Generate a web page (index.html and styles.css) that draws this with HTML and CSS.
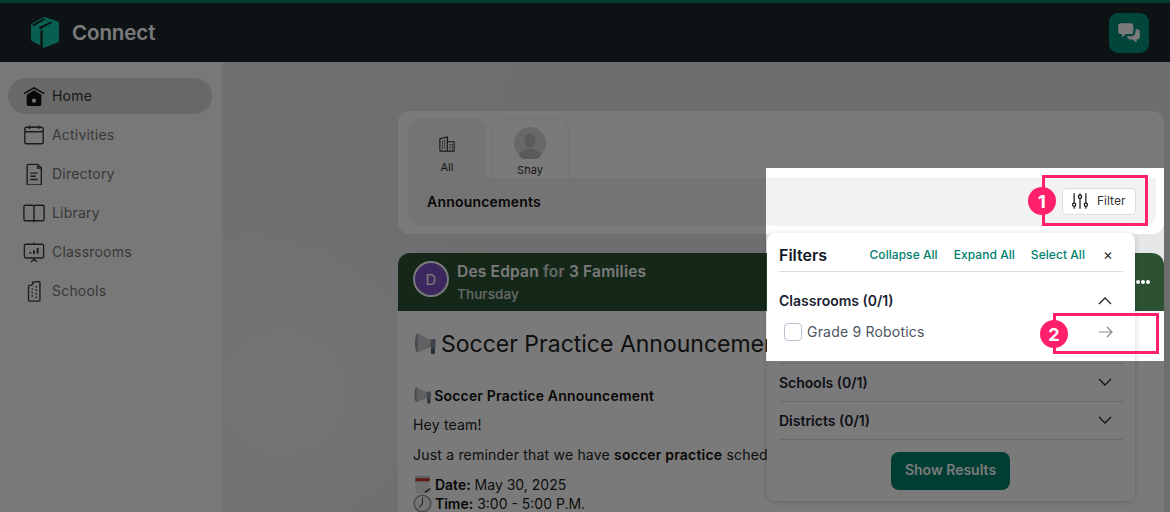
FILE: index.html
```html
<!DOCTYPE html>
<html lang="en">
<head>
<meta charset="utf-8">
<title>Connect</title>
<link rel="stylesheet" href="styles.css">
</head>
<body>
<div class="app">
  <header class="topbar">
    <div class="brand">
      <svg class="logo" viewBox="0 0 28 31"><path fill="#12c4a6" d="M0 8.500C0 7.600.4 7 1.200 6.500L12 .6c.9-.5 1.700-.6 2.600-.3l11.700 4c1 .3 1.700.8 1.700 1.800v17.600c0 .9-.5 1.400-1.300 1.700L13.200 30.700c-.9.300-1.500-.1-1.500-1V13c-1.100-.2-1.900.1-2.300.9V28.500L1.200 24.300C.4 23.900 0 23.300 0 22.500z"/><path fill="none" stroke="#10181b" stroke-width="1.800" d="M1.800 8.500 13.500 2M8.500 11 20.500 5.200M8.500 11.500c1-.9 2.200-1.100 3.300-.5"/></svg>
      <span class="brand-name">Connect</span>
    </div>
    <button class="chat-btn" aria-label="Messages">
      <svg viewBox="0 0 24 24" width="26" height="26"><path fill="#fff" d="M4.500 3h9C15 3 16 4 16 5.500v5C16 12 15 13 13.500 13H9l-3.500 3v-3h-1C3 13 2 12 2 10.500v-5C2 4 3 3 4.500 3z"/><path fill="#fff" d="M18 8.500h1.500C21 8.500 22 9.500 22 11v4.500c0 1.500-1 2.500-2.500 2.500H19v3l-3.500-3H13c-1 0-1.800-.5-2.200-1.300L10 15h4c2.200 0 4-1.800 4-4z"/></svg>
    </button>
  </header>
  <div class="body">
    <nav class="sidebar">
      <a class="nav-item active">
        <svg class="nav-icon" viewBox="0 0 24 24"><path fill="none" stroke="#111" stroke-width="1.600" d="M1 9.500 12 3l11 6.500"/><path fill="#111" d="M4 10.500 12 5.800l8 4.700V21c0 1.100-.9 2-2 2H6c-1.100 0-2-.9-2-2z"/><rect x="10" y="15" width="4" height="4" rx=".6" fill="#f1f1f1"/></svg>
        <span>Home</span>
      </a>
      <a class="nav-item">
        <svg class="nav-icon" viewBox="0 0 24 24" fill="none" stroke="#3c3c3c" stroke-width="1.500"><rect x="2" y="3.500" width="20" height="18" rx="2"/><path d="M2 8.500h20M7 1.500v4M17 1.500v4M10 3.500h4"/></svg>
        <span>Activities</span>
      </a>
      <a class="nav-item">
        <svg class="nav-icon" viewBox="0 0 24 24" fill="none" stroke="#3c3c3c" stroke-width="1.500"><path d="M4.500 3c0-.8.700-1.500 1.500-1.500H16l4 4v17c0 .8-.7 1.500-1.500 1.500H6c-.8 0-1.500-.7-1.500-1.500z"/><path d="M16 1.500v4h4M8 11h8M8 14.500h6M8 18h8"/></svg>
        <span>Directory</span>
      </a>
      <a class="nav-item">
        <svg class="nav-icon" viewBox="0 0 24 24" fill="none" stroke="#3c3c3c" stroke-width="1.500"><path d="M12 5c0-1-.5-1.500-1.500-1.500h-8C1.700 3.500 1 4 1 5v14c0 1 .7 1.500 1.500 1.500H12h9.500c.8 0 1.500-.5 1.500-1.500V5c0-1-.7-1.500-1.500-1.500h-8C12.500 3.500 12 4 12 5zM12 5v17"/></svg>
        <span>Library</span>
      </a>
      <a class="nav-item">
        <svg class="nav-icon" viewBox="0 0 24 24" fill="none" stroke="#3c3c3c" stroke-width="1.500"><rect x="1.500" y="3.500" width="21" height="15" rx="1.500"/><path d="M12 1.500v2M12 18.500v2M8.500 23l3.500-3 3.500 3"/><path stroke-width="2" d="M8 14v-2M12 14v-4M16 14V7.500"/></svg>
        <span>Classrooms</span>
      </a>
      <a class="nav-item">
        <svg class="nav-icon" viewBox="0 0 24 24" fill="none" stroke="#3c3c3c" stroke-width="1.500"><path d="M6 6.500 10.500 5V2.500L17 1.500c1 0 1.500.5 1.500 1.500V21.500c0 .8-.5 1.500-1.500 1.500H7.500C6.700 23 6 22.300 6 21.500z"/><path stroke-width="1.600" stroke-dasharray="1.600 2.200" d="M10 9v11M14.500 6.500V20"/></svg>
        <span>Schools</span>
      </a>
    </nav>
    <main class="main">
      <section class="feed-head">
        <div class="tabs">
          <div class="tab tab-active">
            <svg class="tab-icon" viewBox="0 0 24 24" fill="none" stroke="#333" stroke-width="1.500"><path d="M2.500 21.500V5l10-2.500v19M12.500 9h9v12.500h-19"/><path stroke-dasharray="1.500 1.500" d="M6 8v11M9 7v12M16 12v7M19 12v7"/></svg>
            <span>All</span>
          </div>
          <div class="tab">
            <span class="person">
              <svg viewBox="0 0 32 32" width="32" height="32"><circle cx="16" cy="16" r="16" fill="#dadada"/><ellipse cx="16" cy="13.500" rx="5.500" ry="7" fill="#bcbcbc"/><path fill="#bcbcbc" d="M5 29c1-5 6-7 11-7s10 2 11 7a16 16 0 0 1-22 0z"/></svg>
            </span>
            <span>Shay</span>
          </div>
        </div>
        <div class="toolbar">
          <span class="toolbar-title">Announcements</span>
          <button class="filter-btn">
            <svg viewBox="0 0 20 20" width="18" height="18" fill="none" stroke="#111" stroke-width="1.300"><path d="M3.500 1.500v11M3.500 16v2.500M10 1.500v2M10 7v11.500M16.500 1.500v11M16.500 16v2.500"/><circle cx="3.500" cy="14.200" r="1.800"/><circle cx="10" cy="5.200" r="1.800"/><circle cx="16.500" cy="14.200" r="1.800"/></svg>
            <span>Filter</span>
          </button>
        </div>
      </section>
      <article class="post">
        <div class="post-head">
          <span class="avatar">D</span>
          <div class="post-meta">
            <div class="post-by"><b>Des Edpan</b> <span class="dim">for</span> <b>3 Families</b></div>
            <div class="post-day">Thursday</div>
          </div>
          <span class="post-menu"><i></i><i></i><i></i></span>
        </div>
        <div class="post-body">
          <h1 class="post-title">
            <svg class="emoji-lg" viewBox="0 0 24 24"><ellipse cx="4.500" cy="11" rx="2.500" ry="9.500" fill="#8f9398"/><path fill="#c6c9cd" d="M4.500 1.500 18 8v7L4.500 20.500z"/><path fill="#dcdfe2" d="M8 9h8v2H8z" opacity=".6"/><rect x="17.500" y="7" width="5" height="9" rx="1" fill="#7f8ea0"/><rect x="18" y="16" width="4" height="6" rx="1" fill="#59626c"/></svg>
            <span>Soccer Practice Announcement</span>
          </h1>
          <p class="post-sub">
            <svg class="emoji emoji-tight" viewBox="0 0 24 24"><ellipse cx="4.500" cy="11" rx="2.500" ry="9.500" fill="#8f9398"/><path fill="#c6c9cd" d="M4.500 1.500 18 8v7L4.500 20.500z"/><rect x="17.500" y="7" width="5" height="9" rx="1" fill="#7f8ea0"/><rect x="18" y="16" width="4" height="6" rx="1" fill="#59626c"/></svg>
            <b>Soccer Practice Announcement</b>
          </p>
          <p>Hey team!</p>
          <p class="nowrap">Just a reminder that we have <b>soccer practice</b> scheduled for this Friday after school.</p>
          <ul class="facts">
            <li>
              <svg class="emoji" viewBox="0 0 24 24"><rect x="3" y="1" width="18" height="22" rx="1.500" fill="#e9e9e9"/><rect x="3" y="1" width="18" height="3" fill="#c9c9c9"/><rect x="3" y="4" width="18" height="4" fill="#c8332d"/><path stroke="#333" stroke-width="1.800" d="m15 22 7-5"/></svg>
              <b>Date:</b> May 30, 2025
            </li>
            <li>
              <svg class="emoji" viewBox="0 0 24 24"><circle cx="12" cy="12" r="10.500" fill="#f4f4f4" stroke="#9a9ea3" stroke-width="2"/><path fill="none" stroke="#444" stroke-width="1.300" d="M12 4.500V12l-4 5"/></svg>
              <b>Time:</b> 3:00 - 5:00 P.M.
            </li>
          </ul>
        </div>
      </article>
    </main>
  </div>
</div>

<aside class="filters">
  <div class="filters-head">
    <strong class="filters-title">Filters</strong>
    <a class="link">Collapse All</a>
    <a class="link">Expand All</a>
    <a class="link">Select All</a>
    <span class="close">×</span>
  </div>
  <div class="group group-open">
    <div class="group-row">
      <span>Classrooms (0/1)</span>
      <svg class="chev" viewBox="0 0 14 8"><path d="M1 7l6-6 6 6"/></svg>
    </div>
    <div class="option">
      <span class="check"></span>
      <span class="option-label">Grade 9 Robotics</span>
      <svg class="arrow" viewBox="0 0 14 12"><path d="M0 6h13M8 1l5 5-5 5"/></svg>
    </div>
  </div>
  <div class="group">
    <div class="group-row">
      <span>Schools (0/1)</span>
      <svg class="chev" viewBox="0 0 14 8"><path d="M1 1l6 6 6-6"/></svg>
    </div>
  </div>
  <div class="group">
    <div class="group-row">
      <span>Districts (0/1)</span>
      <svg class="chev" viewBox="0 0 14 8"><path d="M1 1l6 6 6-6"/></svg>
    </div>
  </div>
  <div class="filters-foot"><button class="show-btn">Show Results</button></div>
</aside>

<div class="spotlight"></div>
<div class="mark mark-one"></div>
<div class="mark mark-two"></div>
<span class="badge badge-one">1</span>
<span class="badge badge-two">2</span>
</body>
</html>
```
FILE: styles.css
```css
* { box-sizing: border-box; }
html, body { margin: 0; height: 512px; overflow: hidden; }
body { position: relative; font-family: Inter, "Liberation Sans", sans-serif; color: #222; background: #fff; }
p, h1, ul { margin: 0; padding: 0; }
button { font: inherit; }

.app { height: 512px; display: flex; flex-direction: column; }

.topbar { height: 62px; flex: none; display: flex; align-items: center; justify-content: space-between; padding: 3px 21px 0 31px; background: #1d282d; border-top: 3px solid #00806c; }
.brand { display: flex; align-items: center; gap: 13px; margin-top: -3px; }
.logo { width: 28px; height: 31px; display: block; }
.brand-name { font-size: 20.500px; font-weight: 600; color: #fff; letter-spacing: -.1px; }
.chat-btn { width: 40px; height: 40px; border: 0; border-radius: 9px; background: #04907c; padding: 0; display: flex; align-items: center; justify-content: center; margin-top: -3px; }

.body { flex: 1; display: flex; min-height: 0; }
.sidebar { width: 222px; flex: none; background: #fbfbfb; padding: 16px 10px 0 8px; display: flex; flex-direction: column; gap: 3px; }
.nav-item { height: 36px; border-radius: 18px; display: flex; align-items: center; gap: 7px; padding-left: 15px; font-size: 14px; letter-spacing: .2px; color: #777; }
.nav-item span { margin-top: -2px; }
.nav-item.active { background: #dcdcda; color: #333; }
.nav-icon { width: 22px; height: 22px; flex: none; }

.main { flex: 1; min-width: 0; padding: 49px 6px 0 176px; background: radial-gradient(circle at 60px 330px, #f3f4f4 0, #eceded 110px, rgba(236,237,237,0) 220px), linear-gradient(110deg, #ebebeb 0%, #e4e6e9 35%, #e6e7e9 100%); }

.feed-head { height: 123px; background: #fff; border-radius: 12px; padding: 7px 8px 8px 10px; display: flex; flex-direction: column; }
.tabs { height: 60px; display: flex; gap: 5px; flex: none; }
.tab { width: 78px; border-radius: 12px 12px 0 0; border: 1px solid #f0f0f0; border-bottom: 0; display: flex; flex-direction: column; align-items: center; font-size: 11px; color: #333; padding-top: 8px; }
.tab-active { background: #f2f2f2; border-color: #f2f2f2; }
.tab-icon { width: 18px; height: 18px; margin: 8px 0 7px; }
.person { height: 32px; margin-bottom: 4px; display: block; }
.toolbar { flex: 1; background: #f2f2f2; border-radius: 0 0 12px 12px; display: flex; align-items: center; justify-content: space-between; padding: 0 20px 0 19px; }
.toolbar-title { font-size: 14px; font-weight: 600; color: #111; letter-spacing: .2px; margin-top: -2px; }
.filter-btn { width: 74px; height: 27px; margin-top: -2px; background: #fff; border: 1px solid #ddd; border-radius: 5px; display: flex; align-items: center; gap: 8px; padding: 0 0 0 8px; font-size: 12px; color: #333; }
.filter-btn span { margin-bottom: 1px; }

.post { margin-top: 19px; background: #fff; border-radius: 12px 12px 0 0; }
.post-head { height: 58px; background: #2c5233; border-radius: 12px 12px 0 0; display: flex; align-items: flex-start; padding: 8px 14px 0 15px; color: #fff; }
.avatar { width: 36px; height: 36px; border-radius: 50%; border: 2px solid #fff; background: #7d52c6; display: flex; align-items: center; justify-content: center; font-size: 15px; margin-right: 8px; flex: none; }
.post-meta { flex: 1; margin-top: 1px; }
.post-by { font-size: 15.500px; line-height: 20px; font-weight: 600; letter-spacing: .2px; }
.post-by b { font-weight: 600; }
.dim { opacity: .8; }
.post-day { font-size: 13.500px; font-weight: 500; line-height: 20px; margin-top: 2px; opacity: .8; letter-spacing: .1px; }
.post-menu { display: flex; gap: 1px; margin-top: 19px; }
.post-menu i { width: 4px; height: 4px; border-radius: 50%; background: #fff; display: block; }

.post-body { padding: 18px 15px 0; font-size: 14px; line-height: 20px; letter-spacing: .2px; color: #222; }
.post-title { display: flex; align-items: center; gap: 4px; font-size: 23px; font-weight: 400; line-height: 30px; margin-bottom: 27px; white-space: nowrap; letter-spacing: 0; }
.emoji-lg { width: 24px; height: 24px; flex: none; }
.emoji { width: 19px; height: 19px; flex: none; vertical-align: -4px; margin-right: -1px; }
.emoji-tight { margin-right: -2px; }
.post-sub b, .facts b, .nowrap b { font-weight: 600; color: #111; }
.post-body > p { margin-bottom: 10px; }
.post-body > .post-sub { margin-bottom: 9px; }
.nowrap { white-space: nowrap; }
.facts { list-style: none; line-height: 19px; letter-spacing: 0; }

.filters { position: absolute; left: 767px; top: 233px; width: 368px; height: 268px; background: #fff; border-radius: 8px; box-shadow: 0 1px 6px rgba(0,0,0,.18); padding: 0 12px; display: flex; flex-direction: column; }
.filters-head { height: 39px; flex: none; display: flex; align-items: center; padding-top: 5px; border-bottom: 1px solid #ddd; font-size: 12px; }
.filters-title { font-size: 16px; font-weight: 600; color: #111827; margin-right: auto; }
.link { font-weight: 500; color: #00806c; margin-right: 16px; letter-spacing: .05px; }
.close { width: 14px; font-size: 15px; color: #333; text-align: center; margin-right: 8px; }
.group { border-bottom: 1px solid #ddd; width: 344px; height: 38px; flex: none; }
.group-open { height: 92px; padding-top: 9px; }
.group-row { height: 37px; display: flex; align-items: center; justify-content: space-between; padding: 0 11px 1px 0; font-size: 14px; font-weight: 600; color: #1a2230; }
.group-open .group-row { height: 40px; }
.chev { width: 14px; height: 8px; fill: none; stroke: #222; stroke-width: 1.300; }
.option { height: 22px; display: flex; align-items: center; padding: 0 10px 0 5px; font-size: 14px; letter-spacing: .2px; color: #4b5563; }
.check { width: 18px; height: 18px; border: 1px solid #b9c2d0; border-radius: 4px; margin-right: 5px; flex: none; }
.option-label { flex: 1; margin-bottom: 2px; }
.arrow { width: 14px; height: 12px; fill: none; stroke: #8a8a8a; stroke-width: 1.200; }
.filters-foot { flex: 1; display: flex; justify-content: center; padding: 12px 1px 0 0; }
.show-btn { width: 119px; height: 38px; border: 0; border-radius: 8px; background: #00806c; color: #fff; font-size: 14px; font-weight: 600; padding: 0 0 3px; }

.spotlight { position: absolute; left: 766px; top: 168px; width: 398px; height: 193px; box-shadow: 0 0 0 3000px rgba(0,0,0,.52); pointer-events: none; }
.mark { position: absolute; border: 3px solid #ff1f6b; }
.mark-one { left: 1042px; top: 175px; width: 106px; height: 51px; }
.mark-two { left: 1053px; top: 313px; width: 106px; height: 41px; }
.badge { position: absolute; width: 28px; height: 28px; border-radius: 50%; background: #ff1f6b; color: #fff; font-size: 18px; font-weight: 700; display: flex; align-items: center; justify-content: center; }
.badge-one { left: 1028px; top: 187px; }
.badge-two { left: 1040px; top: 320px; }
```
